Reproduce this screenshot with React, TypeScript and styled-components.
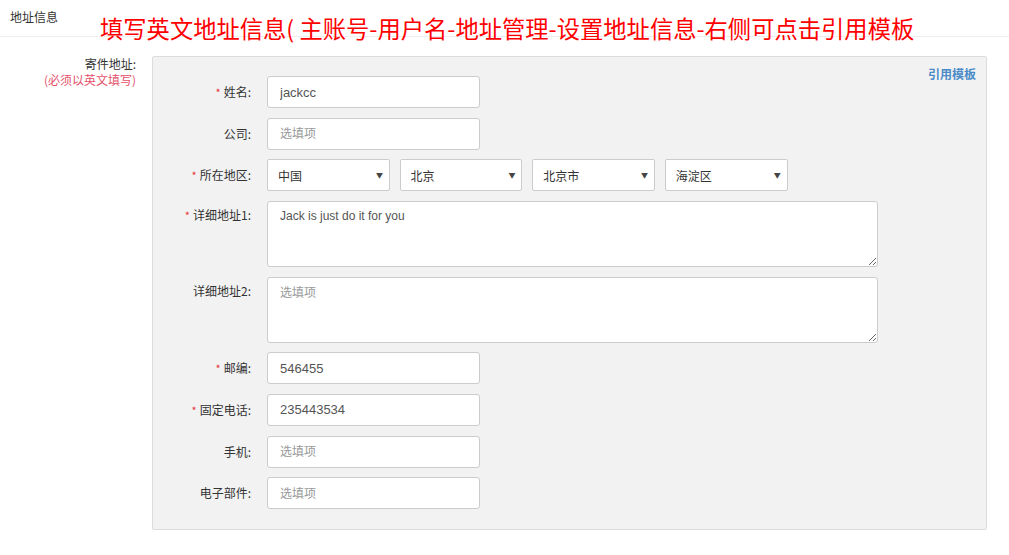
import React from 'react';
import styled, { createGlobalStyle } from 'styled-components';

const GlobalStyle = createGlobalStyle`
  html, body {
    margin: 0;
    padding: 0;
    background: #fff;
  }
  body {
    font-family: "Noto Sans CJK SC", "Liberation Sans", sans-serif;
    font-size: 12px;
    color: #333;
  }
  * {
    box-sizing: border-box;
  }
`;

interface Field {
  label: string;
  required?: boolean;
  value?: string;
  kind?: 'input' | 'textarea';
}

const topFields: Field[] = [
  { label: '姓名', required: true, value: 'jackcc' },
  { label: '公司' },
];

const addressFields: Field[] = [
  { label: '详细地址1', required: true, value: 'Jack is just do it for you', kind: 'textarea' },
  { label: '详细地址2', kind: 'textarea' },
  { label: '邮编', required: true, value: '546455' },
  { label: '固定电话', required: true, value: '235443534' },
  { label: '手机' },
  { label: '电子部件' },
];

const regions = ['中国', '北京', '北京市', '海淀区'];

const App: React.FC = () => {
  const renderField = (f: Field) => (
    <Row key={f.label} $top={f.kind === 'textarea'}>
      <Label $top={f.kind === 'textarea'}>
        {f.required && <Star>*</Star>}
        {f.label}:
      </Label>
      {f.kind === 'textarea' ? (
        <TextArea placeholder="选填项" defaultValue={f.value} />
      ) : (
        <TextInput placeholder="选填项" defaultValue={f.value} />
      )}
    </Row>
  );

  return (
    <>
      <GlobalStyle />
      <Page>
        <Header>
          <HeaderTitle>地址信息</HeaderTitle>
          <Annotation>填写英文地址信息( 主账号-用户名-地址管理-设置地址信息-右侧可点击引用模板</Annotation>
        </Header>
        <Body>
          <Side>
            <SideTitle>寄件地址:</SideTitle>
            <SideNote>(必须以英文填写)</SideNote>
          </Side>
          <Panel>
            <Form>
              {topFields.map(renderField)}
              <Row>
                <Label>
                  <Star>*</Star>所在地区:
                </Label>
                <Selects>
                  {regions.map(r => (
                    <SelectBox key={r}>
                      <Select defaultValue={r}>
                        <option value={r}>{r}</option>
                      </Select>
                      <Arrow>▼</Arrow>
                    </SelectBox>
                  ))}
                </Selects>
              </Row>
              {addressFields.map(renderField)}
            </Form>
            <TemplateLink>引用模板</TemplateLink>
          </Panel>
        </Body>
      </Page>
    </>
  );
};

const Page = styled.div`
  width: 1009px;
  min-height: 555px;
`;

const Header = styled.div`
  display: flex;
  align-items: flex-start;
  height: 37px;
  border-bottom: 1px solid #eeeeee;
  padding-left: 10px;
`;

const HeaderTitle = styled.div`
  margin-top: 10px;
  line-height: 14px;
  font-size: 12px;
  color: #333;
  width: 90px;
`;

const Annotation = styled.div`
  margin-top: 15px;
  font-size: 23.3px;
  line-height: 26px;
  color: #ff0000;
  white-space: nowrap;
`;

const Body = styled.div`
  display: flex;
  align-items: flex-start;
  padding-top: 19px;
`;

const Side = styled.div`
  width: 140px;
  padding-right: 4px;
  text-align: right;
  line-height: 16px;
`;

const SideTitle = styled.div`
  color: #333;
  font-size: 12px;
`;

const SideNote = styled.div`
  color: #e5506a;
  font-size: 12px;
`;

const Panel = styled.div`
  margin-left: 12px;
  width: 835px;
  height: 474px;
  display: flex;
  align-items: flex-start;
  background: #f2f2f2;
  border: 1px solid #dcdcdc;
  border-radius: 2px;
  padding: 9px 10px 0 0;
`;

const Form = styled.div`
  display: flex;
  flex-direction: column;
  gap: 9.67px;
  padding-top: 10px;
`;

const Row = styled.div<{ $top?: boolean }>`
  display: flex;
  align-items: ${({ $top }) => ($top ? 'flex-start' : 'center')};
`;

const Label = styled.div<{ $top?: boolean }>`
  width: 102px;
  padding-right: 4px;
  margin-right: 12px;
  text-align: right;
  font-size: 12px;
  line-height: 16px;
  color: #333;
  white-space: nowrap;
  padding-top: ${({ $top }) => ($top ? '6px' : '0')};
`;

const Star = styled.span`
  color: #e4393c;
  font-size: 11px;
  margin-right: 3px;
`;

const TextInput = styled.input`
  width: 213px;
  height: 32px;
  padding: 0 12px;
  border: 1px solid #cccccc;
  border-radius: 3px;
  background: #fff;
  font-family: "Liberation Sans", "Noto Sans CJK SC", sans-serif;
  font-size: 13px;
  color: #555;
  outline: none;
  &::placeholder {
    color: #999;
    font-size: 12px;
    font-family: "Noto Sans CJK SC", sans-serif;
  }
`;

const TextArea = styled.textarea`
  width: 611px;
  height: 66px;
  padding: 6px 12px;
  border: 1px solid #cccccc;
  border-radius: 3px;
  background: #fff;
  font-family: "Liberation Sans", "Noto Sans CJK SC", sans-serif;
  font-size: 12px;
  line-height: 16px;
  color: #555;
  outline: none;
  display: block;
  &::placeholder {
    color: #999;
    font-family: "Noto Sans CJK SC", sans-serif;
  }
`;

const Selects = styled.div`
  display: flex;
  gap: 9.7px;
`;

const SelectBox = styled.div`
  position: relative;
  width: 122.9px;
  height: 32px;
`;

const Select = styled.select`
  appearance: none;
  width: 100%;
  height: 100%;
  padding: 0 10px;
  border: 1px solid #cccccc;
  border-radius: 2px;
  background: #fff;
  font-family: "Noto Sans CJK SC", sans-serif;
  font-size: 12px;
  color: #333;
  outline: none;
`;

const Arrow = styled.span`
  position: absolute;
  right: 7px;
  top: 50%;
  transform: translateY(-55%);
  font-size: 7px;
  color: #444;
  pointer-events: none;
`;

const TemplateLink = styled.a`
  margin-left: auto;
  color: #4a8bc8;
  font-weight: bold;
  font-size: 12px;
  line-height: 16px;
  cursor: pointer;
`;

export default App;
